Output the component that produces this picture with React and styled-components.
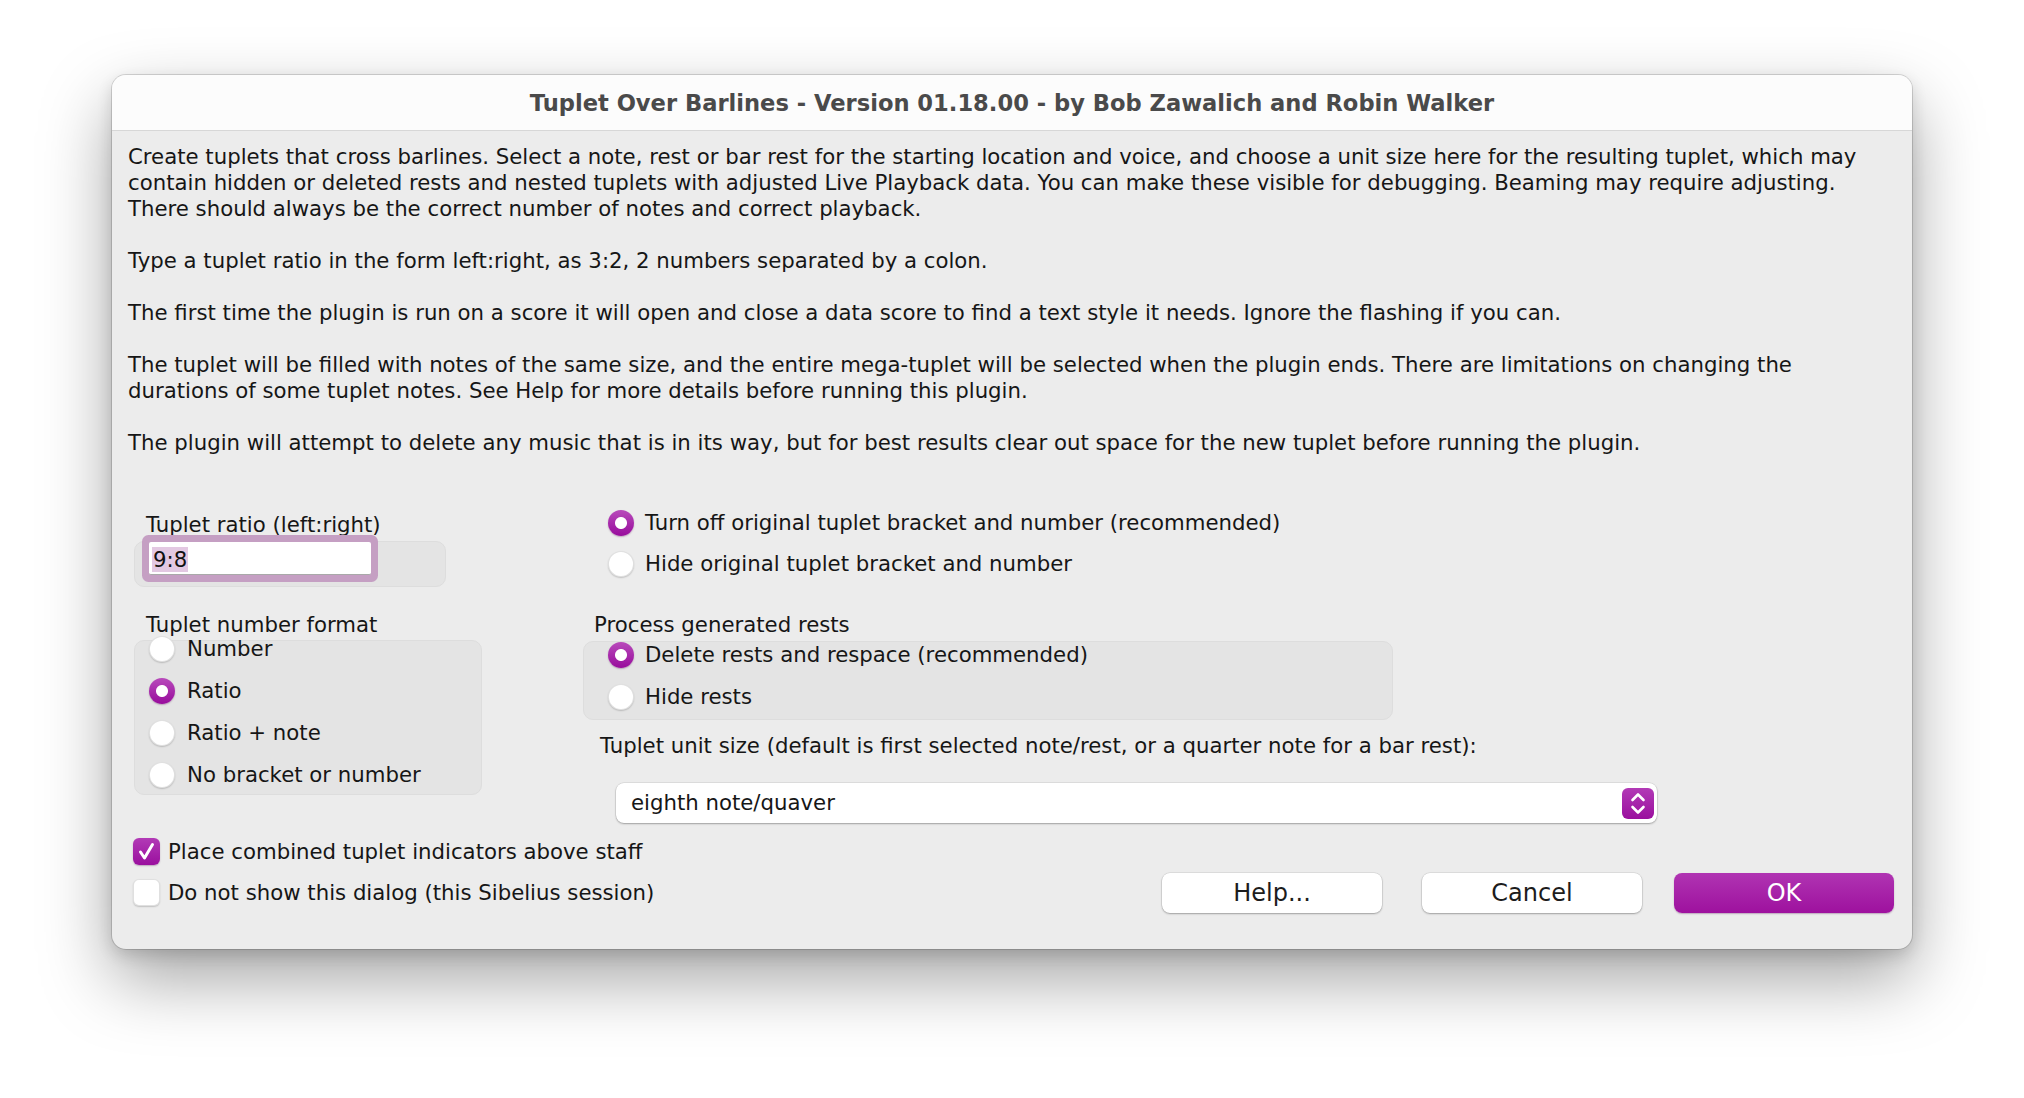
import React from "react";
import styled, { createGlobalStyle } from "styled-components";

const GlobalStyle = createGlobalStyle`
  html, body {
    margin: 0;
    background: #ffffff;
  }
  body {
    font-family: "DejaVu Sans", "Liberation Sans", sans-serif;
  }
`;

const paragraphs = [
	[
		"Create tuplets that cross barlines. Select a note, rest or bar rest for the starting location and voice, and choose a unit size here for the resulting tuplet, which may",
		"contain hidden or deleted rests and nested tuplets with adjusted Live Playback data. You can make these visible for debugging. Beaming may require adjusting.",
		"There should always be the correct number of notes and correct playback.",
	],
	["Type a tuplet ratio in the form left:right, as 3:2, 2 numbers separated by a colon."],
	[
		"The first time the plugin is run on a score it will open and close a data score to find a text style it needs. Ignore the flashing if you can.",
	],
	[
		"The tuplet will be filled with notes of the same size, and the entire mega-tuplet will be selected when the plugin ends. There are limitations on changing the",
		"durations of some tuplet notes. See Help for more details before running this plugin.",
	],
	[
		"The plugin will attempt to delete any music that is in its way, but for best results clear out space for the new tuplet before running the plugin.",
	],
];

const numberFormats = [
	{ label: "Number", on: false },
	{ label: "Ratio", on: true },
	{ label: "Ratio + note", on: false },
	{ label: "No bracket or number", on: false },
];

export default function App() {
	return (
		<Page>
			<GlobalStyle />
			<Dialog>
				<TitleBar>Tuplet Over Barlines - Version 01.18.00 - by Bob Zawalich and Robin Walker</TitleBar>
				<Body>
					<Description>
						{paragraphs.map((p, i) => (
							<Para key={i}>
								{p.map((line, j) => (
									<Line key={j}>{line}</Line>
								))}
							</Para>
						))}
					</Description>

					<Controls>
						<LeftCol>
							<FieldLabel $top={10}>Tuplet ratio (left:right)</FieldLabel>
							<GroupBox $w={312} $h={46} $top={3} $padLeft={14}>
								<TextField>
									<Selected>9:8</Selected>
								</TextField>
							</GroupBox>

							<FieldLabel $top={25}>Tuplet number format</FieldLabel>
							<GroupBox $w={348} $h={155} $top={2}>
								<RadioList $pull={13}>
									{numberFormats.map((f) => (
										<RadioRow key={f.label} $h={42} $pad={14} $gap={12}>
											<Radio $on={f.on} />
											<span>{f.label}</span>
										</RadioRow>
									))}
								</RadioList>
							</GroupBox>
						</LeftCol>

						<RightCol>
							<RadioRow $h={41} $pad={25} $gap={11}>
								<Radio $on />
								<span>Turn off original tuplet bracket and number (recommended)</span>
							</RadioRow>
							<RadioRow $h={41} $pad={25} $gap={11}>
								<Radio />
								<span>Hide original tuplet bracket and number</span>
							</RadioRow>

							<FieldLabel $top={28} $left={11}>
								Process generated rests
							</FieldLabel>
							<GroupBox $w={810} $h={79} $top={3}>
								<RadioList $pull={8}>
									<RadioRow $h={42} $pad={24} $gap={11}>
										<Radio $on />
										<span>Delete rests and respace (recommended)</span>
									</RadioRow>
									<RadioRow $h={42} $pad={24} $gap={11}>
										<Radio />
										<span>Hide rests</span>
									</RadioRow>
								</RadioList>
							</GroupBox>

							<FieldLabel $top={13} $left={17}>
								Tuplet unit size (default is first selected note/rest, or a quarter note for a bar rest):
							</FieldLabel>
							<Select>
								<span>eighth note/quaver</span>
								<SelectArrow>
									<svg width="32" height="31" viewBox="0 0 32 31">
										<polyline
											points="10.5,12 16,6.5 21.5,12"
											fill="none"
											stroke="#fff"
											strokeWidth="2.6"
											strokeLinecap="round"
											strokeLinejoin="round"
										/>
										<polyline
											points="10.5,19 16,24.5 21.5,19"
											fill="none"
											stroke="#fff"
											strokeWidth="2.6"
											strokeLinecap="round"
											strokeLinejoin="round"
										/>
									</svg>
								</SelectArrow>
							</Select>
						</RightCol>
					</Controls>

					<Footer>
						<Checks>
							<CheckRow>
								<CheckBox $on>
									<svg width="27" height="27" viewBox="0 0 27 27">
										<polyline
											points="7.5,14 11.5,20 19.5,6.5"
											fill="none"
											stroke="#fff"
											strokeWidth="3"
											strokeLinecap="round"
											strokeLinejoin="round"
										/>
									</svg>
								</CheckBox>
								<span>Place combined tuplet indicators above staff</span>
							</CheckRow>
							<CheckRow>
								<CheckBox />
								<span>Do not show this dialog (this Sibelius session)</span>
							</CheckRow>
						</Checks>
						<Buttons>
							<Button $after={40}>Help...</Button>
							<Button $after={32}>Cancel</Button>
							<Button $primary>OK</Button>
						</Buttons>
					</Footer>
				</Body>
			</Dialog>
		</Page>
	);
}

const Page = styled.div`
	display: flex;
	justify-content: center;
	align-items: flex-start;
	height: 1098px;
	padding-top: 75px;
	box-sizing: border-box;
	background: #ffffff;
`;

const Dialog = styled.div`
	width: 1800px;
	height: 874px;
	background: #ececec;
	border-radius: 14px;
	overflow: hidden;
	box-shadow: 0 0 0 1px rgba(0, 0, 0, 0.14), 0 30px 70px rgba(0, 0, 0, 0.36), 0 6px 16px rgba(0, 0, 0, 0.14);
	color: #161616;
	font-size: 21.25px;
	line-height: 26px;
`;

const TitleBar = styled.div`
	height: 56px;
	border-bottom: 1px solid #d7d7d7;
	background: #fcfcfc;
	display: flex;
	align-items: center;
	justify-content: center;
	padding-top: 1px;
	box-sizing: border-box;
	font-weight: bold;
	font-size: 22.6px;
	color: #4a4a4a;
	white-space: nowrap;
`;

const Body = styled.div`
	padding: 13px 16px 0;
`;

const Description = styled.div`
	display: flex;
	flex-direction: column;
	gap: 26px;
`;

const Para = styled.p`
	margin: 0;
`;

const Line = styled.span`
	display: block;
	white-space: nowrap;
`;

const Controls = styled.div`
	display: flex;
	align-items: flex-start;
	margin-top: 46px;
`;

const LeftCol = styled.div`
	display: flex;
	flex-direction: column;
	width: 348px;
	margin-left: 6px;
`;

const RightCol = styled.div`
	display: flex;
	flex-direction: column;
	width: 1074px;
	margin-left: 101px;
`;

const FieldLabel = styled.div`
	margin-top: ${(p) => p.$top || 0}px;
	margin-left: ${(p) => p.$left || 12}px;
	white-space: nowrap;
`;

const GroupBox = styled.div`
	width: ${(p) => p.$w}px;
	height: ${(p) => p.$h}px;
	margin-top: ${(p) => p.$top || 0}px;
	padding-left: ${(p) => p.$padLeft || 0}px;
	box-sizing: border-box;
	background: #e4e4e4;
	border: 1px solid #dddddd;
	border-radius: 10px;
`;

const TextField = styled.div`
	width: 222px;
	height: 33px;
	box-sizing: border-box;
	background: #ffffff;
	border-radius: 2px;
	border-bottom: 1px solid #a9a9a9;
	box-shadow: 0 0 0 7px #c59fc3;
	padding: 5px 0 0 3px;
	line-height: 25px;
	color: #111;
`;

const Selected = styled.span`
	display: inline-block;
	background: #e3c8e2;
	padding: 0 1px;
`;

const RadioList = styled.div`
	display: flex;
	flex-direction: column;
	margin-top: -${(p) => p.$pull}px;
`;

const RadioRow = styled.div`
	display: flex;
	align-items: center;
	height: ${(p) => p.$h}px;
	padding-left: ${(p) => p.$pad}px;
	gap: ${(p) => p.$gap}px;
	white-space: nowrap;
`;

const Radio = styled.span`
	flex: none;
	width: 26px;
	height: 26px;
	border-radius: 50%;
	box-sizing: border-box;
	background: ${(p) =>
		p.$on
			? "radial-gradient(circle, #ffffff 0 5.5px, transparent 6.5px), linear-gradient(#b84abb, #980c9c)"
			: "#ffffff"};
	box-shadow: ${(p) =>
		p.$on
			? "0 1px 1.5px rgba(80, 0, 80, 0.3)"
			: "inset 0 0 0 1px rgba(0, 0, 0, 0.12), 0 1px 1.5px rgba(0, 0, 0, 0.18)"};
`;

const Select = styled.div`
	display: flex;
	align-items: center;
	justify-content: space-between;
	width: 1041px;
	height: 40px;
	margin-top: 24px;
	margin-left: 33px;
	padding: 0 3px 0 15px;
	box-sizing: border-box;
	background: #ffffff;
	border-radius: 8px;
	box-shadow: 0 0 0 0.5px rgba(0, 0, 0, 0.12), 0 1px 2px rgba(0, 0, 0, 0.28);
	white-space: nowrap;
`;

const SelectArrow = styled.span`
	display: flex;
	width: 32px;
	height: 31px;
	border-radius: 6px;
	background: linear-gradient(#b23ab6, #9a0f9e);
`;

const Footer = styled.div`
	display: flex;
	justify-content: space-between;
	align-items: flex-end;
	margin-top: 8px;
`;

const Checks = styled.div`
	display: flex;
	flex-direction: column;
	margin-left: 5px;
`;

const CheckRow = styled.div`
	display: flex;
	align-items: center;
	gap: 8px;
	height: 41px;
	white-space: nowrap;
`;

const CheckBox = styled.span`
	flex: none;
	display: flex;
	width: 27px;
	height: 27px;
	border-radius: 6px;
	box-sizing: border-box;
	background: ${(p) => (p.$on ? "linear-gradient(#b23ab6, #9a0f9e)" : "#ffffff")};
	box-shadow: ${(p) =>
		p.$on
			? "0 1px 1.5px rgba(80, 0, 80, 0.3)"
			: "inset 0 0 0 1px rgba(0, 0, 0, 0.12), 0 1px 1.5px rgba(0, 0, 0, 0.18)"};
`;

const Buttons = styled.div`
	display: flex;
	margin-right: 2px;
	margin-bottom: 0;
`;

const Button = styled.button`
	width: 220px;
	height: 40px;
	margin-right: ${(p) => p.$after || 0}px;
	border: none;
	border-radius: 8px;
	font-family: "DejaVu Sans", "Liberation Sans", sans-serif;
	font-size: 24px;
	color: ${(p) => (p.$primary ? "#ffffff" : "#1c1c1c")};
	background: ${(p) => (p.$primary ? "linear-gradient(#b034b2, #9e119e)" : "#ffffff")};
	box-shadow: ${(p) =>
		p.$primary
			? "0 1px 1.5px rgba(80, 0, 80, 0.3)"
			: "0 0 0 0.5px rgba(0, 0, 0, 0.12), 0 1px 2px rgba(0, 0, 0, 0.28)"};
	padding: 0;
`;
